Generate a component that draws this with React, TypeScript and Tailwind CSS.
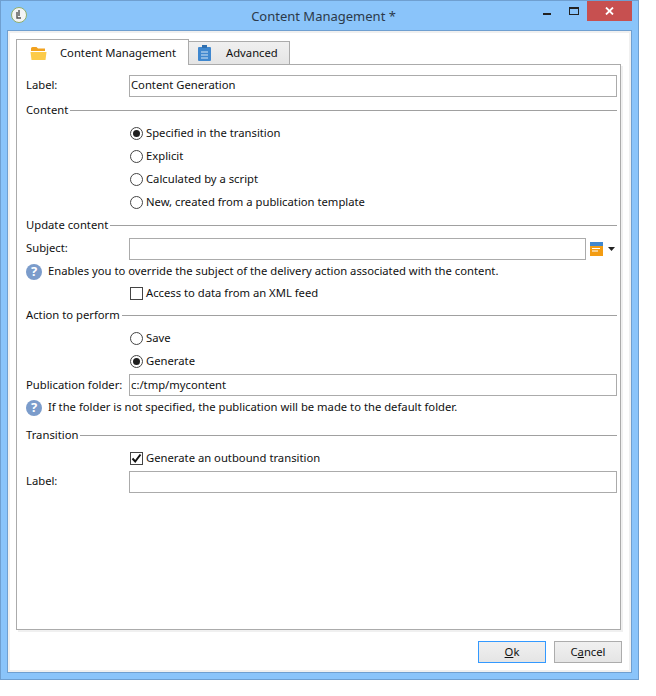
import type { ReactNode } from 'react';

function Radio({ checked }: { checked?: boolean }) {
  return (
    <span className="flex h-[13px] w-[13px] shrink-0 items-center justify-center rounded-full border border-[#444444] bg-white">
      {checked && <span className="h-[7px] w-[7px] rounded-full bg-[#1f1f1f]" />}
    </span>
  );
}

function Checkbox({ checked }: { checked?: boolean }) {
  return (
    <span className="flex h-[13px] w-[13px] shrink-0 items-center justify-center border border-[#444444] bg-white">
      {checked && (
        <svg width="11" height="11" viewBox="0 0 11 11">
          <path d="M1.5 5.5 L4.2 8.5 L9.5 1.5" fill="none" stroke="#111" strokeWidth="2" />
        </svg>
      )}
    </span>
  );
}

function HelpIcon() {
  return (
    <span className="mr-[6px] flex h-4 w-4 shrink-0 items-center justify-center rounded-full bg-[#7b9ccb] text-[13px] font-bold leading-none text-white">
      ?
    </span>
  );
}

function Section({ title }: { title: string }) {
  return (
    <div className="flex h-[23px] items-center">
      <span className="mr-[2px]">{title}</span>
      <span className="h-px flex-1 bg-[#a0a0a0]" />
    </div>
  );
}

function Option({ children, h = 'h-[23px]' }: { children: ReactNode; h?: string }) {
  return <div className={`flex ${h} items-center gap-[3px] pl-[104px]`}>{children}</div>;
}

function Field({ label, value, className = 'h-[23px]' }: { label: string; value?: string; className?: string }) {
  return (
    <div className={`flex items-center ${className}`}>
      <span className="w-[103px] shrink-0">{label}</span>
      <div className="flex h-[22px] flex-1 items-center border border-[#ababab] bg-white px-px">{value}</div>
    </div>
  );
}

function DialogButton({ children, focused }: { children: ReactNode; focused?: boolean }) {
  return (
    <button
      className={`h-[22px] w-[68px] border bg-gradient-to-b from-[#f0f0f0] to-[#e5e5e5] text-center text-[11.25px] leading-none text-[#111] ${
        focused ? 'border-[#3399ff]' : 'border-[#acacac]'
      }`}
    >
      {children}
    </button>
  );
}

export default function App() {
  return (
    <div className="h-[696px] w-[656px] bg-white font-['Noto_Sans','Open_Sans',sans-serif] text-[11.25px] text-[#111]">
      <div className="flex h-[680px] w-[639px] flex-col border border-[#6f9fd0] bg-[#8ac4fa] pb-[6px] pl-[6px] pr-[6px]">
        {/* Title bar */}
        <div className="flex h-[29px] shrink-0 items-start">
          <div className="flex h-full w-[102px] items-start pl-[4px] pt-[6px]">
            <svg width="16" height="16" viewBox="0 0 16 16">
              <circle cx="8" cy="8" r="7.5" fill="#f4f4f4" stroke="#8fae6c" />
              <path d="M8 3v6M6 5v6h4" fill="none" stroke="#555" strokeWidth="1.4" />
            </svg>
          </div>
          <div className="flex-1 pt-[5px] text-center text-[13px] leading-[20px] text-[#2c3a4a]">Content Management *</div>
          <div className="flex h-[20px] w-[94px] items-start">
            <span className="ml-[5px] mt-[12px] h-[2px] w-[8px] bg-[#222]" />
            <span className="ml-[18px] mt-[6px] h-[8px] w-[10px] border border-t-2 border-[#222]" />
            <span className="ml-[8px] flex h-[20px] w-[45px] items-center justify-center bg-[#c75050]">
              <svg width="9" height="8" viewBox="0 0 9 8">
                <path d="M1 0.5 L8 7.5 M8 0.5 L1 7.5" stroke="#fff" strokeWidth="1.8" />
              </svg>
            </span>
          </div>
        </div>

        {/* Client area */}
        <div className="flex min-h-0 flex-1 flex-col border border-[#6f9fd0] bg-white pl-[8px] pr-[9px] shadow-[inset_0_0_0_2px_#f0f0f0]">
          {/* Tabs */}
          <div className="flex h-[33px] shrink-0 items-end pt-[7px]">
            <div className="relative z-10 -mb-px flex h-[26px] w-[173px] items-center border border-b-0 border-[#ababab] bg-white pl-[13px] pt-[2px]">
              <svg width="17" height="15" viewBox="0 0 17 15">
                <path d="M1 2.5 Q1 1 2.5 1 H6.5 L8 2.5 H15 V5 H1 Z" fill="#f2a21f" />
                <path d="M0.5 6 H16.5 L15.5 14 H1.5 Z" fill="#fccb4a" />
              </svg>
              <span className="ml-[13px] text-[#111]">Content Management</span>
            </div>
            <div className="flex h-[23px] w-[101px] items-center border border-b-0 border-l-0 border-[#ababab] bg-gradient-to-b from-[#f0f0f0] to-[#e5e5e5] pl-[9px]">
              <svg width="13" height="16" viewBox="0 0 13 16">
                <rect x="0" y="2" width="13" height="14" rx="1" fill="#3f87cf" />
                <rect x="4" y="0" width="5" height="3" fill="#2f6fb0" />
                <path d="M3 7h7M3 10h7M3 13h7" stroke="#d5e6f6" strokeWidth="1" />
              </svg>
              <span className="ml-[15px] text-[#111]">Advanced</span>
            </div>
          </div>

          {/* Tab panel */}
          <div className="h-[566px] w-[605px] shrink-0 border border-[#ababab] bg-white pl-[9px] pr-[3px] pt-[9px] shadow-[2px_2px_0_#f0f0f0]">
            <Field label="Label:" value="Content Generation" />
            <div className="mt-[2px]">
              <Section title="Content" />
            </div>
            <Option><Radio checked /><span>Specified in the transition</span></Option>
            <Option><Radio /><span>Explicit</span></Option>
            <Option><Radio /><span>Calculated by a script</span></Option>
            <Option><Radio /><span>New, created from a publication template</span></Option>
            <Section title="Update content" />

            <div className="flex h-[23px] items-center">
              <span className="w-[103px] shrink-0">Subject:</span>
              <div className="h-[22px] w-[457px] border border-[#ababab] bg-white" />
              <svg className="ml-[4px]" width="13" height="14" viewBox="0 0 13 14">
                <rect x="0" y="0" width="13" height="14" fill="#f39c12" />
                <rect x="0" y="0" width="13" height="4" fill="#3f87cf" />
                <path d="M2 6.5h8M2 9h6" stroke="#fff" strokeWidth="1.2" />
              </svg>
              <svg className="ml-[5px]" width="7" height="4" viewBox="0 0 7 4">
                <path d="M0 0H7L3.5 4Z" fill="#222" />
              </svg>
            </div>

            <div className="flex h-[22px] items-center pt-px">
              <HelpIcon />
              <span>Enables you to override the subject of the delivery action associated with the content.</span>
            </div>
            <Option h="h-[22px]"><Checkbox /><span>Access to data from an XML feed</span></Option>
            <Section title="Action to perform" />
            <Option><Radio /><span>Save</span></Option>
            <Option><Radio checked /><span>Generate</span></Option>
            <div className="mt-px">
              <Field label="Publication folder:" value="c:/tmp/mycontent" className="h-[22px]" />
            </div>
            <div className="flex h-[23px] items-center">
              <HelpIcon />
              <span>If the folder is not specified, the publication will be made to the default folder.</span>
            </div>
            <div className="mt-[5px]">
              <Section title="Transition" />
            </div>
            <Option><Checkbox checked /><span>Generate an outbound transition</span></Option>
            <Field label="Label:" />
          </div>

          {/* Footer */}
          <div className="flex flex-1 items-start justify-end gap-2 pt-[11px]">
            <DialogButton focused><span className="underline">O</span>k</DialogButton>
            <DialogButton>C<span className="underline">a</span>ncel</DialogButton>
          </div>
        </div>
      </div>
    </div>
  );
}
